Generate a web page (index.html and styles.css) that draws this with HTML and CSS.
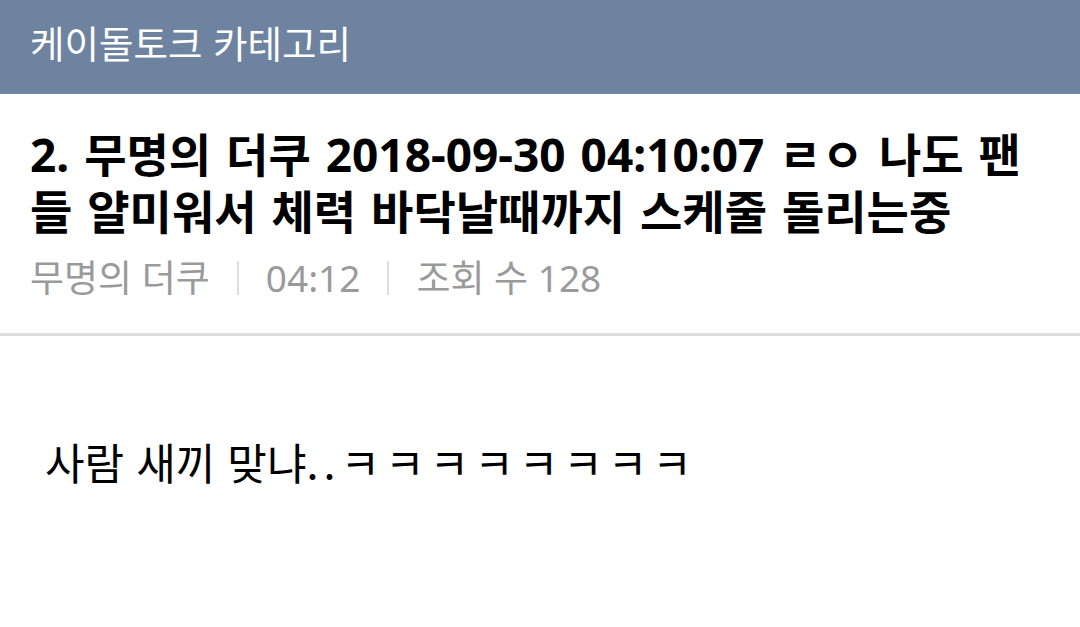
FILE: index.html
```html
<!DOCTYPE html>
<html lang="ko">
<head>
<meta charset="utf-8">
<link rel="stylesheet" href="styles.css">
</head>
<body>
<header class="topbar">케이돌토크 카테고리</header>
<section class="post-head">
  <h1 class="title">2. 무명의 더쿠 2018-09-30 04:10:07 ㄹㅇ 나도 팬들 얄미워서 체력 바닥날때까지 스케줄 돌리는중</h1>
  <div class="meta">
    <span class="item">무명의 더쿠</span>
    <span class="sep"></span>
    <span class="item">04:12</span>
    <span class="sep"></span>
    <span class="item">조회 수 128</span>
  </div>
</section>
<article class="content">사람 새끼 맞냐<span class="laugh">..ㅋㅋㅋㅋㅋㅋㅋㅋ</span></article>
</body>
</html>
```

FILE: styles.css
```css
html, body {
  margin: 0;
  padding: 0;
  background: #fff;
  font-family: "Noto Sans", "Noto Sans CJK KR", sans-serif;
}
.topbar {
  height: 94px;
  background: #6e83a0;
  color: #fff;
  font-family: "Noto Sans CJK KR", sans-serif;
  font-size: 37.5px;
  line-height: 84px;
  padding-left: 30px;
  box-sizing: border-box;
}
.post-head {
  padding: 32px 30px 0 30px;
  border-bottom: 3px solid #dddddd;
  height: 242px;
  box-sizing: border-box;
}
.title {
  margin: 0;
  font-size: 46px;
  font-weight: 700;
  line-height: 57px;
  word-spacing: 3px;
  color: #000;
}
.meta {
  margin-top: 15px;
  display: flex;
  align-items: center;
  color: #9a9a9a;
  font-size: 37px;
  line-height: 46px;
}
.sep {
  width: 2px;
  height: 34px;
  background: #dedede;
  margin: 0 27px;
}
.content {
  padding: 97px 45px 0 45px;
  font-family: "Noto Sans CJK KR", sans-serif;
  font-size: 43px;
  line-height: 56px;
  color: #000;
}
.laugh {
  letter-spacing: 5px;
}
```
